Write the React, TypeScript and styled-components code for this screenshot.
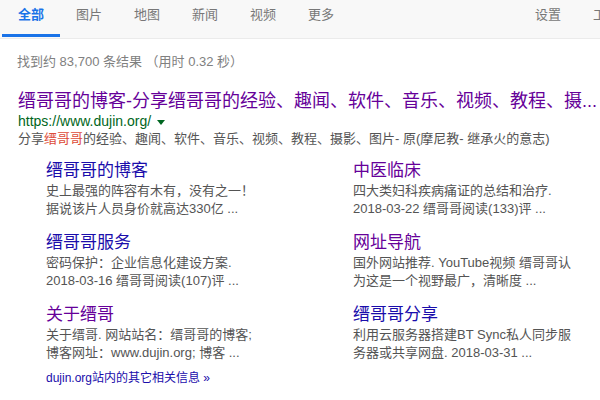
import styled, { createGlobalStyle } from "styled-components";

const GlobalStyle = createGlobalStyle`
  html, body { margin: 0; padding: 0; background: #fff; overflow: hidden; }
  body {
    font-family: "Liberation Sans", Arial, "Noto Sans CJK SC", sans-serif;
    color: #545454;
  }
`;

const TabBar = styled.div`
  display: flex;
  height: 38px;
  padding-left: 2px;
  background: #f8f8f8;
  border-bottom: 1px solid #ebebeb;
  white-space: nowrap;
  overflow: hidden;
`;

const Tab = styled.div<{ $active?: boolean; $push?: boolean }>`
  box-sizing: border-box;
  height: 37px;
  flex: none;
  padding: 6px 16px 0;
  font-size: 13px;
  line-height: 18px;
  color: ${({ $active }) => ($active ? "#1a73e8" : "#777")};
  font-weight: ${({ $active }) => ($active ? 700 : 400)};
  border-bottom: 3px solid ${({ $active }) => ($active ? "#1a73e8" : "transparent")};
  margin-left: ${({ $push }) => ($push ? "169px" : "0")};
`;

const Stats = styled.div`
  margin: 14px 0 0 17px;
  font-size: 13px;
  line-height: 18px;
  color: #808080;
`;

const Result = styled.div`
  margin: 19px 0 0 18px;
`;

const Title = styled.div`
  font-size: 18px;
  line-height: 22px;
  color: #660099;
  white-space: nowrap;
`;

const UrlRow = styled.div`
  display: flex;
  align-items: center;
  gap: 6px;
  font-size: 14px;
  line-height: 18px;
  color: #006621;
`;

const Arrow = styled.span`
  width: 0;
  height: 0;
  border-left: 4px solid transparent;
  border-right: 4px solid transparent;
  border-top: 5px solid #006621;
  margin-top: 2px;
`;

const Snippet = styled.div`
  font-size: 13px;
  line-height: 18px;
  color: #545454;
  white-space: nowrap;
`;

const Hit = styled.span`
  color: #dd4b39;
`;

const Sitelinks = styled.div`
  display: grid;
  grid-template-columns: 307px 1fr;
  row-gap: 14px;
  margin: 12px 0 0 28px;
`;

const Sitelink = styled.div`
  display: flex;
  flex-direction: column;
`;

const LinkTitle = styled.div<{ $visited?: boolean }>`
  font-size: 17px;
  line-height: 22px;
  color: ${({ $visited }) => ($visited ? "#660099" : "#1a0dab")};
`;

const LinkLine = styled.div`
  font-size: 13px;
  line-height: 18px;
  color: #545454;
  white-space: nowrap;
`;

const More = styled.div`
  margin: 7px 0 0 28px;
  font-size: 12px;
  line-height: 18px;
  color: #1a0dab;
`;

const tabs = ["全部", "图片", "地图", "新闻", "视频", "更多"];

const links = [
  { title: "缙哥哥的博客", visited: false, lines: ["史上最强的阵容有木有，没有之一！", "据说该片人员身价就高达330亿 ..."] },
  { title: "中医临床", visited: true, lines: ["四大类妇科疾病痛证的总结和治疗.", "2018-03-22 缙哥哥阅读(133)评 ..."] },
  { title: "缙哥哥服务", visited: false, lines: ["密码保护：企业信息化建设方案.", "2018-03-16 缙哥哥阅读(107)评 ..."] },
  { title: "网址导航", visited: true, lines: ["国外网站推荐. YouTube视频 缙哥哥认", "为这是一个视野最广，清晰度 ..."] },
  { title: "关于缙哥", visited: true, lines: ["关于缙哥. 网站站名：缙哥哥的博客;", "博客网址：www.dujin.org; 博客 ..."] },
  { title: "缙哥哥分享", visited: false, lines: ["利用云服务器搭建BT Sync私人同步服", "务器或共享网盘. 2018-03-31 ..."] },
];

export default function App() {
  return (
    <>
      <GlobalStyle />
      <TabBar>
        {tabs.map((t, i) => (
          <Tab key={t} $active={i === 0}>{t}</Tab>
        ))}
        <Tab $push>设置</Tab>
        <Tab>工具</Tab>
      </TabBar>
      <Stats>找到约 83,700 条结果 （用时 0.32 秒）</Stats>
      <Result>
        <Title>缙哥哥的博客-分享缙哥哥的经验、趣闻、软件、音乐、视频、教程、摄...</Title>
        <UrlRow>
          https://www.dujin.org/
          <Arrow />
        </UrlRow>
        <Snippet>
          分享<Hit>缙哥哥</Hit>的经验、趣闻、软件、音乐、视频、教程、摄影、图片- 原(摩尼教- 继承火的意志)
        </Snippet>
        <Sitelinks>
          {links.map((l) => (
            <Sitelink key={l.title}>
              <LinkTitle $visited={l.visited}>{l.title}</LinkTitle>
              {l.lines.map((line) => (
                <LinkLine key={line}>{line}</LinkLine>
              ))}
            </Sitelink>
          ))}
        </Sitelinks>
        <More>dujin.org站内的其它相关信息 »</More>
      </Result>
    </>
  );
}
